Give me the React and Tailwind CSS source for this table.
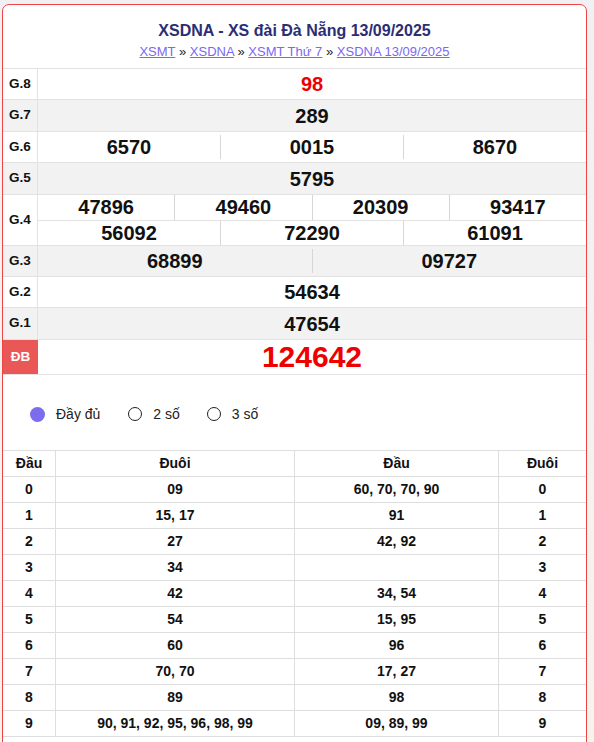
import React from 'react'

const prizes = [
  { label: 'G.8', h: 'h-[31px]', gray: false, rows: [['98']], red: true },
  { label: 'G.7', h: 'h-[32px]', gray: true, rows: [['289']] },
  { label: 'G.6', h: 'h-[31px]', gray: false, rows: [['6570', '0015', '8670']], inset: true },
  { label: 'G.5', h: 'h-[32px]', gray: true, rows: [['5795']] },
  { label: 'G.4', h: 'h-[51px]', gray: false, rows: [['47896', '49460', '20309', '93417'], ['56092', '72290', '61091']] },
  { label: 'G.3', h: 'h-[31px]', gray: true, rows: [['68899', '09727']], inset: true },
  { label: 'G.2', h: 'h-[31px]', gray: false, rows: [['54634']] },
  { label: 'G.1', h: 'h-[32px]', gray: true, rows: [['47654']] },
]

const loto = [
  ['0', '09', '60, 70, 70, 90', '0'],
  ['1', '15, 17', '91', '1'],
  ['2', '27', '42, 92', '2'],
  ['3', '34', '', '3'],
  ['4', '42', '34, 54', '4'],
  ['5', '54', '15, 95', '5'],
  ['6', '60', '96', '6'],
  ['7', '70, 70', '17, 27', '7'],
  ['8', '89', '98', '8'],
  ['9', '90, 91, 92, 95, 96, 98, 99', '09, 89, 99', '9'],
]

function PrizeRow({ p }) {
  return (
    <div className={`flex border-b border-[#e2e2e2] ${p.h} ${p.gray ? 'bg-[#f2f2f2]' : 'bg-white'}`}>
      <div className="w-[35px] shrink-0 border-r border-[#e2e2e2] flex items-center justify-center text-[13.5px] font-bold text-[#111]">
        {p.label}
      </div>
      <div className="flex-1 flex flex-col">
        {p.rows.map((row, ri) => (
          <div
            key={ri}
            className={`flex-1 flex ${p.inset ? 'py-[3px]' : ''} ${ri < p.rows.length - 1 ? 'border-b border-[#e2e2e2]' : ''}`}
          >
            {row.map((n, i) => (
              <div
                key={i}
                className={`flex-1 flex items-center justify-center text-[20px] font-bold leading-none ${p.red ? 'text-[#ee0000]' : 'text-[#111]'} ${i > 0 ? 'border-l border-[#d6d6d6]' : ''}`}
              >
                {n}
              </div>
            ))}
          </div>
        ))}
      </div>
    </div>
  )
}

export default function App() {
  return (
    <div className="min-h-screen bg-gradient-to-b from-[#f1f1f5] to-[#f7f3ec] pt-[4px] pl-[2px] font-['Liberation_Sans',Arial,sans-serif]">
      <div className="w-[585px] bg-white border border-[#ef4444] rounded-t-[7px] pb-[20px]">
        <div className="pt-[16px] pb-[7px] text-center">
          <h1 className="text-[16px] leading-[20px] font-bold text-[#2b2e74]">
            XSDNA - XS đài Đà Nẵng 13/09/2025
          </h1>
          <div className="mt-[2px] text-[13px] leading-[18px] text-[#222]">
            <a className="text-[#7b68ee] underline">XSMT</a> »{' '}
            <a className="text-[#7b68ee] underline">XSDNA</a> »{' '}
            <a className="text-[#7b68ee] underline">XSMT Thứ 7</a> »{' '}
            <a className="text-[#7b68ee] underline">XSDNA 13/09/2025</a>
          </div>
        </div>

        <div className="border-t border-[#e2e2e2]">
          {prizes.map((p) => (
            <PrizeRow key={p.label} p={p} />
          ))}
          <div className="flex h-[35px] border-b border-[#e2e2e2]">
            <div className="w-[35px] shrink-0 bg-[#e95757] flex items-center justify-center text-[13.5px] font-bold text-white">
              ĐB
            </div>
            <div className="flex-1 flex items-center justify-center text-[30px] font-bold leading-none text-[#ee0000]">
              124642
            </div>
          </div>
        </div>

        <div className="h-[75px] flex items-center pt-[3px] pl-[27px] text-[14px] text-[#222]">
          <div className="flex items-center">
            <span className="w-[15px] h-[15px] rounded-full bg-[#7b6cf0]" />
            <span className="ml-[11px]">Đầy đủ</span>
          </div>
          <div className="flex items-center ml-[28px]">
            <span className="w-[14px] h-[14px] rounded-full border border-[#222]" />
            <span className="ml-[11px]">2 số</span>
          </div>
          <div className="flex items-center ml-[27px]">
            <span className="w-[14px] h-[14px] rounded-full border border-[#222]" />
            <span className="ml-[11px]">3 số</span>
          </div>
        </div>

        <div className="border-t border-[#dedede] text-[14px] font-bold text-[#111]">
          <div className="grid grid-cols-[53px_239px_204px_87px] h-[26px] border-b border-[#dedede]">
            <div className="flex items-center justify-center border-r border-[#dedede]">Đầu</div>
            <div className="flex items-center justify-center border-r border-[#dedede]">Đuôi</div>
            <div className="flex items-center justify-center border-r border-[#dedede]">Đầu</div>
            <div className="flex items-center justify-center">Đuôi</div>
          </div>
          {loto.map((r) => (
            <div key={r[0]} className="grid grid-cols-[53px_239px_204px_87px] h-[26px] border-b border-[#dedede]">
              <div className="flex items-center justify-center border-r border-[#dedede]">{r[0]}</div>
              <div className="flex items-center justify-center border-r border-[#dedede]">{r[1]}</div>
              <div className="flex items-center justify-center border-r border-[#dedede]">{r[2]}</div>
              <div className="flex items-center justify-center">{r[3]}</div>
            </div>
          ))}
        </div>
      </div>
    </div>
  )
}
